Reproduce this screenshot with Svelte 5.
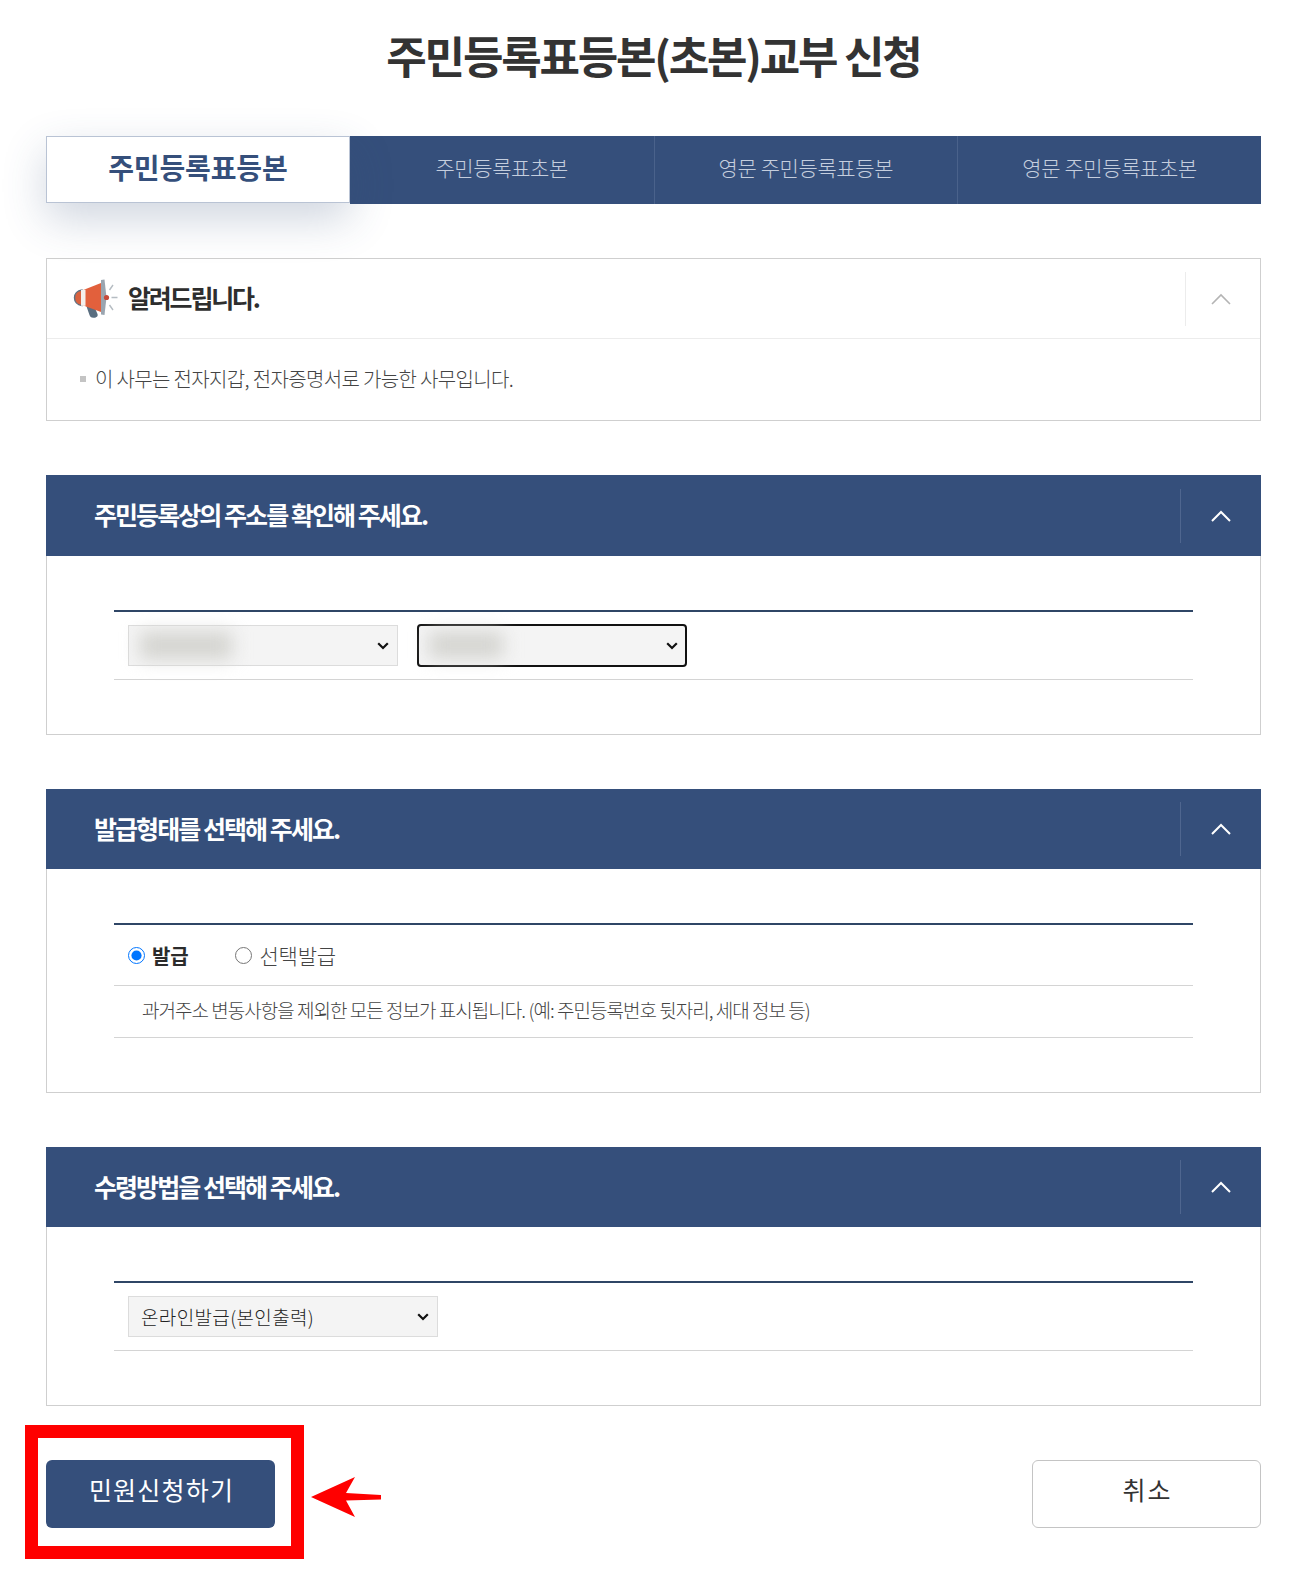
<script>
  const tabs = ['주민등록표초본', '영문 주민등록표등본', '영문 주민등록표초본'];
</script>

<div class="page">
  <h1>주민등록표등본(초본)교부 신청</h1>

  <div class="tabs">
    <div class="tab active">주민등록표등본</div>
    {#each tabs as t}
      <div class="tab">{t}</div>
    {/each}
  </div>

  <section class="notice">
    <header class="nhead">
      <svg class="mega" width="46" height="40" viewBox="0 0 46 40">
        <path d="M13 26l8 1 3.500 8c.8 2.300-1 3.500-3.500 3.800-2.500.3-4-.8-4.600-3z" fill="#5a6e80"/>
        <path d="M9 11.500 L28 4 V33 L9 26 Z" fill="#e2603c"/>
        <path d="M9 11 C4 11.500 1.500 15 1.500 18.700 C1.500 22.500 4 26 9 26.500 Z" fill="#d9623f" stroke="#5d6f80" stroke-width="1.400"/>
        <rect x="8" y="10.800" width="4.500" height="16" fill="#f4efec"/>
        <path d="M28 1 L31.500 .5 L33.500 18.500 L31.500 36 L28 35.500 Z" fill="#9aa5b0"/>
        <circle cx="33.500" cy="18.500" r="2.600" fill="#c64a3a"/>
        <path d="M36.500 11l3.500-5M38.500 18.500h6M36.500 26l3.500 5" stroke="#b5bcc2" stroke-width="1.400" fill="none"/>
      </svg>
      <span class="ntitle">알려드립니다.</span>
      <div class="nbtn">
        <svg width="20" height="12" viewBox="0 0 20 12"><path d="M1 11 L10 2 L19 11" fill="none" stroke="#b4b4b4" stroke-width="1.600"/></svg>
      </div>
    </header>
    <div class="nbody"><i></i>이 사무는 전자지갑, 전자증명서로 가능한 사무입니다.</div>
  </section>

  <section class="panel first">
    <header class="phead">
      <span>주민등록상의 주소를 확인해 주세요.</span>
      <div class="pbtn"><svg width="20" height="12" viewBox="0 0 20 12"><path d="M1 11 L10 2 L19 11" fill="none" stroke="#fff" stroke-width="2"/></svg></div>
    </header>
    <div class="pbody">
      <div class="frow selects">
        <div class="selwrap w1">
          <select class="sel" aria-label="시도"><option></option></select>
          <span class="blur b1"></span>
        </div>
        <div class="selwrap w2">
          <select class="sel focus" aria-label="시군구"><option></option></select>
          <span class="blur b2"></span>
        </div>
      </div>
    </div>
  </section>

  <section class="panel">
    <header class="phead">
      <span>발급형태를 선택해 주세요.</span>
      <div class="pbtn"><svg width="20" height="12" viewBox="0 0 20 12"><path d="M1 11 L10 2 L19 11" fill="none" stroke="#fff" stroke-width="2"/></svg></div>
    </header>
    <div class="pbody">
      <div class="frow radios">
        <label class="on"><input type="radio" name="k" checked />발급</label>
        <label><input type="radio" name="k" />선택발급</label>
      </div>
      <div class="desc">과거주소 변동사항을 제외한 모든 정보가 표시됩니다. (예: 주민등록번호 뒷자리, 세대 정보 등)</div>
    </div>
  </section>

  <section class="panel">
    <header class="phead">
      <span>수령방법을 선택해 주세요.</span>
      <div class="pbtn"><svg width="20" height="12" viewBox="0 0 20 12"><path d="M1 11 L10 2 L19 11" fill="none" stroke="#fff" stroke-width="2"/></svg></div>
    </header>
    <div class="pbody">
      <div class="frow selects">
        <select class="sel wide" aria-label="수령방법"><option>온라인발급(본인출력)</option></select>
      </div>
    </div>
  </section>

  <div class="actions">
    <div class="btn-hl">
      <button class="btn primary">민원신청하기</button>
      <span class="redbox"></span>
      <svg class="arrow" width="72" height="42" viewBox="0 0 72 42"><path d="M1 21 L45 1 L36 17 L71 19 L71 23.500 L36 24.500 L45 41 Z" fill="#ff0000"/></svg>
    </div>
    <button class="btn ghost">취소</button>
  </div>
</div>

<style>
  :global(body) { margin: 0; background: #fff; }
  .page {
    padding: 0 45px 0 46px;
    height: 1575px;
    box-sizing: border-box;
    font-family: "Noto Sans CJK KR", "Noto Sans", sans-serif;
    color: #333;
    overflow: hidden;
  }
  h1 {
    margin: 0;
    height: 136px;
    padding-top: 24px;
    box-sizing: border-box;
    font-size: 44px;
    line-height: 62px;
    font-weight: 700;
    letter-spacing: -2.200px;
    text-align: center;
    color: #333;
  }
  .tabs { display: grid; grid-template-columns: repeat(4, 1fr); height: 68px; }
  .tab {
    display: flex; align-items: center; justify-content: center;
    padding-bottom: 7px;
    box-sizing: border-box;
    background: #354f7b;
    font-size: 21px; font-weight: 300; letter-spacing: -0.400px;
    color: #c5cede;
    border-left: 1px solid #4a628b;
  }
  .tab.active {
    height: 67px;
    padding-bottom: 5px;
    background: #fff;
    color: #354f7b;
    font-size: 28px; font-weight: 700; letter-spacing: -0.150px;
    border: 1px solid #b9c3d4;
    box-shadow: 0 16px 44px rgba(53, 79, 123, .24);
    position: relative;
  }
  .tab.active + .tab { border-left: 0; }
  .notice {
    margin-top: 54px;
    height: 163px;
    box-sizing: border-box;
    border: 1px solid #cfcfcf;
  }
  .nhead {
    display: flex; align-items: center;
    height: 80px;
    box-sizing: border-box;
    padding-left: 26px;
    border-bottom: 1px solid #ececec;
  }
  .mega { margin-right: 10px; flex: none; }
  .ntitle { font-size: 25px; font-weight: 700; letter-spacing: -2.200px; color: #2e2e2e; margin: -4px 0 0 -1px; }
  .nbtn {
    margin-left: auto;
    width: 75px; height: 54px;
    padding-right: 5px;
    border-left: 1px solid #ececec;
    display: flex; align-items: center; justify-content: center;
    box-sizing: border-box;
  }
  .nbody {
    display: flex; align-items: center;
    padding: 25px 0 0 33px;
    font-size: 20px; font-weight: 300; letter-spacing: -0.650px; line-height: 30px;
    color: #444;
  }
  .nbody i { width: 6px; height: 6px; background: #c4c4c4; margin-right: 9px; }
  .panel {
    margin-top: 54px;
    border: 1px solid #cfcfcf;
    border-top: 0;
  }
  .phead {
    display: flex; align-items: center;
    height: 80px;
    margin: 0 -1px;
    padding-left: 48px;
    background: #354f7b;
    color: #fff;
    font-size: 25px; font-weight: 700; letter-spacing: -1.950px;
  }
  .phead span { margin-top: -3px; }
  .first .phead { height: 81px; }
  .pbtn {
    margin-left: auto;
    width: 81px; height: 54px;
    border-left: 1px solid #4f668f;
    display: flex; align-items: center; justify-content: center;
    box-sizing: border-box;
  }
  .pbody { padding: 54px 67px 54px 67px; }
  .frow { border-top: 2px solid #2f4666; border-bottom: 1px solid #d4d4d4; }
  .selects {
    display: flex; align-items: center; gap: 19px;
    height: 70px;
    box-sizing: border-box;
    padding-left: 14px;
  }
  .selwrap { position: relative; display: flex; }
  .sel {
    appearance: none;
    box-sizing: border-box;
    height: 41px;
    background-color: #f4f4f4;
    background-image: url("data:image/svg+xml,%3Csvg xmlns='http://www.w3.org/2000/svg' width='12' height='8' viewBox='0 0 12 8'%3E%3Cpath d='M1.200 1.200 6 6 10.800 1.200' fill='none' stroke='%23111' stroke-width='2.200'/%3E%3C/svg%3E");
    background-repeat: no-repeat;
    background-position: right 8px center;
    border: 1px solid #dcdcdc;
    border-radius: 0;
    font-family: inherit;
    font-size: 19px;
    font-weight: 300;
    letter-spacing: 0.350px;
    color: #222;
    padding-left: 12px;
  }
  .w1 .sel { width: 270px; }
  .w2 .sel { width: 270px; height: 43px; border: 2.500px solid #111; border-radius: 4px; background-position: right 7px center; }
  .wide { width: 310px; }
  .blur { position: absolute; background: #d4d4d0; filter: blur(9px); pointer-events: none; }
  .b1 { left: 12px; top: 7px; width: 92px; height: 27px; }
  .b2 { left: 12px; top: 8px; width: 74px; height: 26px; }
  .radios {
    display: flex; align-items: center;
    height: 63px;
    box-sizing: border-box;
    padding-left: 14px;
    gap: 47px;
    font-size: 21px; font-weight: 300; letter-spacing: -0.200px;
    color: #444;
  }
  .radios label { display: flex; align-items: center; gap: 7px; }
  .radios input { margin: 0; width: 17px; height: 17px; }
  .on { font-weight: 700; color: #2b2b2b; font-size: 20px; }
  .desc {
    height: 52px;
    box-sizing: border-box;
    display: flex; align-items: center;
    padding: 0 0 4px 28px;
    border-bottom: 1px solid #d4d4d4;
    font-size: 19px; font-weight: 300; letter-spacing: -0.970px;
    color: #444;
  }
  .actions { display: flex; justify-content: space-between; margin-top: 54px; }
  .btn-hl { position: relative; }
  .btn {
    display: block;
    width: 229px; height: 68px;
    border-radius: 6px;
    font-family: inherit;
    font-size: 25px;
    font-weight: 400;
    letter-spacing: 1.200px;
    padding: 0 0 11px 2px;
  }
  .primary { background: #354f7b; border: 0; color: #fff; }
  .ghost { background: #fff; border: 1px solid #c4c4c4; color: #333; letter-spacing: 2px; }
  .redbox {
    position: absolute; left: -21px; top: -35px;
    width: 279px; height: 134px;
    box-sizing: border-box;
    border: 13px solid #ff0000;
  }
  .arrow { position: absolute; left: 264px; top: 16px; }
</style>
